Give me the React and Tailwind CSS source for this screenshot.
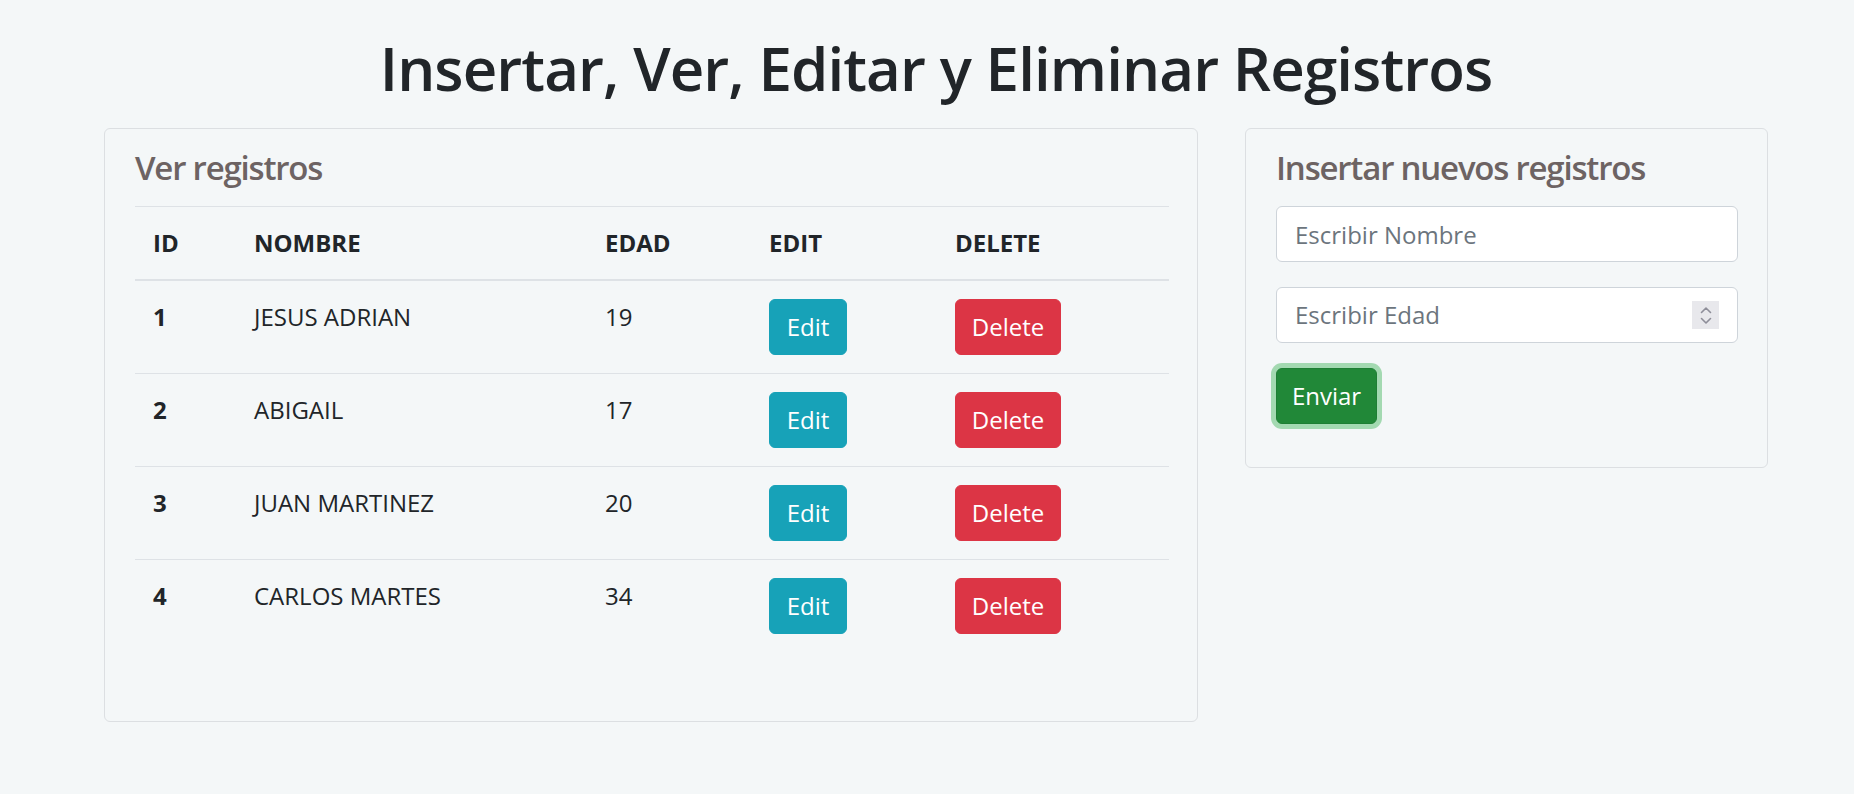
import { useState } from 'react';

const initialRows = [
  { id: 1, nombre: 'JESUS ADRIAN', edad: 19 },
  { id: 2, nombre: 'ABIGAIL', edad: 17 },
  { id: 3, nombre: 'JUAN MARTINEZ', edad: 20 },
  { id: 4, nombre: 'CARLOS MARTES', edad: 34 },
];

const Spinner = () => (
  <div className="mr-[18px] flex h-[28px] w-[27px] flex-col items-center justify-center gap-[3px] bg-[#e8e8ec]">
    <svg width="12" height="8" viewBox="0 0 12 8" fill="none">
      <path d="M1.5 6.5 6 2l4.5 4.5" stroke="#8e8e99" strokeWidth="1.6" strokeLinecap="round" strokeLinejoin="round" />
    </svg>
    <svg width="12" height="8" viewBox="0 0 12 8" fill="none">
      <path d="M1.5 1.5 6 6l4.5-4.5" stroke="#8e8e99" strokeWidth="1.6" strokeLinecap="round" strokeLinejoin="round" />
    </svg>
  </div>
);

export default function App() {
  const [rows] = useState(initialRows);
  const [nombre, setNombre] = useState('');
  const [edad, setEdad] = useState('');

  return (
    <div className="min-h-screen bg-[#f4f7f8] font-['Open_Sans','Noto_Sans',sans-serif] text-[#212529]">
      <div className="ml-[104px] w-[1664px] pt-[32px]">
        <h1 className="text-center text-[60px] font-semibold leading-[72px] tracking-[-0.9px] text-[#212529]">
          Insertar, Ver, Editar y Eliminar Registros
        </h1>

        <div className="mt-[24px] flex items-start gap-[47px]">
          <section className="h-[594px] w-[1094px] rounded-[6px] border border-[#dcdfe2] px-[30px] pt-[17px]">
            <h4 className="mb-[17px] text-[33px] font-semibold leading-[43px] tracking-[-1.2px] text-[#6d6363]">Ver registros</h4>

            <table className="w-[1034px] table-fixed border-collapse text-left text-[24px] leading-[36px]">
              <thead>
                <tr>
                  <th className="w-[101px] border-t border-b-2 border-[#dee2e6] p-[18px] font-bold">ID</th>
                  <th className="w-[351px] border-t border-b-2 border-[#dee2e6] p-[18px] font-bold">NOMBRE</th>
                  <th className="w-[164px] border-t border-b-2 border-[#dee2e6] p-[18px] font-bold">EDAD</th>
                  <th className="w-[186px] border-t border-b-2 border-[#dee2e6] p-[18px] font-bold">EDIT</th>
                  <th className="w-[232px] border-t border-b-2 border-[#dee2e6] p-[18px] font-bold">DELETE</th>
                </tr>
              </thead>
              <tbody>
                {rows.map((row) => (
                  <tr key={row.id}>
                    <th className="border-t border-[#dee2e6] p-[18px] align-top font-bold">{row.id}</th>
                    <td className="border-t border-[#dee2e6] p-[18px] align-top">{row.nombre}</td>
                    <td className="border-t border-[#dee2e6] p-[18px] align-top">{row.edad}</td>
                    <td className="border-t border-[#dee2e6] p-[18px] align-top">
                      <button className="h-[56px] w-[78px] rounded-[6px] border border-[#17a2b8] bg-[#17a2b8] text-center leading-[36px] text-white">
                        Edit
                      </button>
                    </td>
                    <td className="border-t border-[#dee2e6] p-[18px] align-top">
                      <button className="h-[56px] w-[106px] rounded-[6px] border border-[#dc3545] bg-[#dc3545] text-center leading-[36px] text-white">
                        Delete
                      </button>
                    </td>
                  </tr>
                ))}
              </tbody>
            </table>
          </section>

          <section className="h-[340px] w-[523px] rounded-[6px] border border-[#dcdfe2] px-[30px] pt-[17px]">
            <h4 className="mb-[17px] text-[33px] font-semibold leading-[43px] tracking-[-1.2px] text-[#6d6363]">Insertar nuevos registros</h4>

            <form onSubmit={(event) => event.preventDefault()}>
              <input
                type="text"
                value={nombre}
                onChange={(event) => setNombre(event.target.value)}
                placeholder="Escribir Nombre"
                className="mb-[25px] block h-[56px] w-[462px] rounded-[6px] border border-[#ced4da] bg-white px-[18px] text-[24px] leading-[36px] text-[#495057] outline-none placeholder:text-[#6c757d]"
              />
              <div className="mb-[25px] flex h-[56px] w-[462px] items-center rounded-[6px] border border-[#ced4da] bg-white">
                <input
                  type="text"
                  value={edad}
                  onChange={(event) => setEdad(event.target.value)}
                  placeholder="Escribir Edad"
                  className="min-w-0 flex-1 bg-transparent px-[18px] text-[24px] leading-[36px] text-[#495057] outline-none placeholder:text-[#6c757d]"
                />
                <Spinner />
              </div>
              <button
                type="submit"
                className="h-[56px] w-[101px] rounded-[6px] border border-[#1e7e34] bg-[#218838] text-[24px] leading-[36px] text-white ring-[5px] ring-[#a3d9b1]"
              >
                Enviar
              </button>
            </form>
          </section>
        </div>
      </div>
    </div>
  );
}
